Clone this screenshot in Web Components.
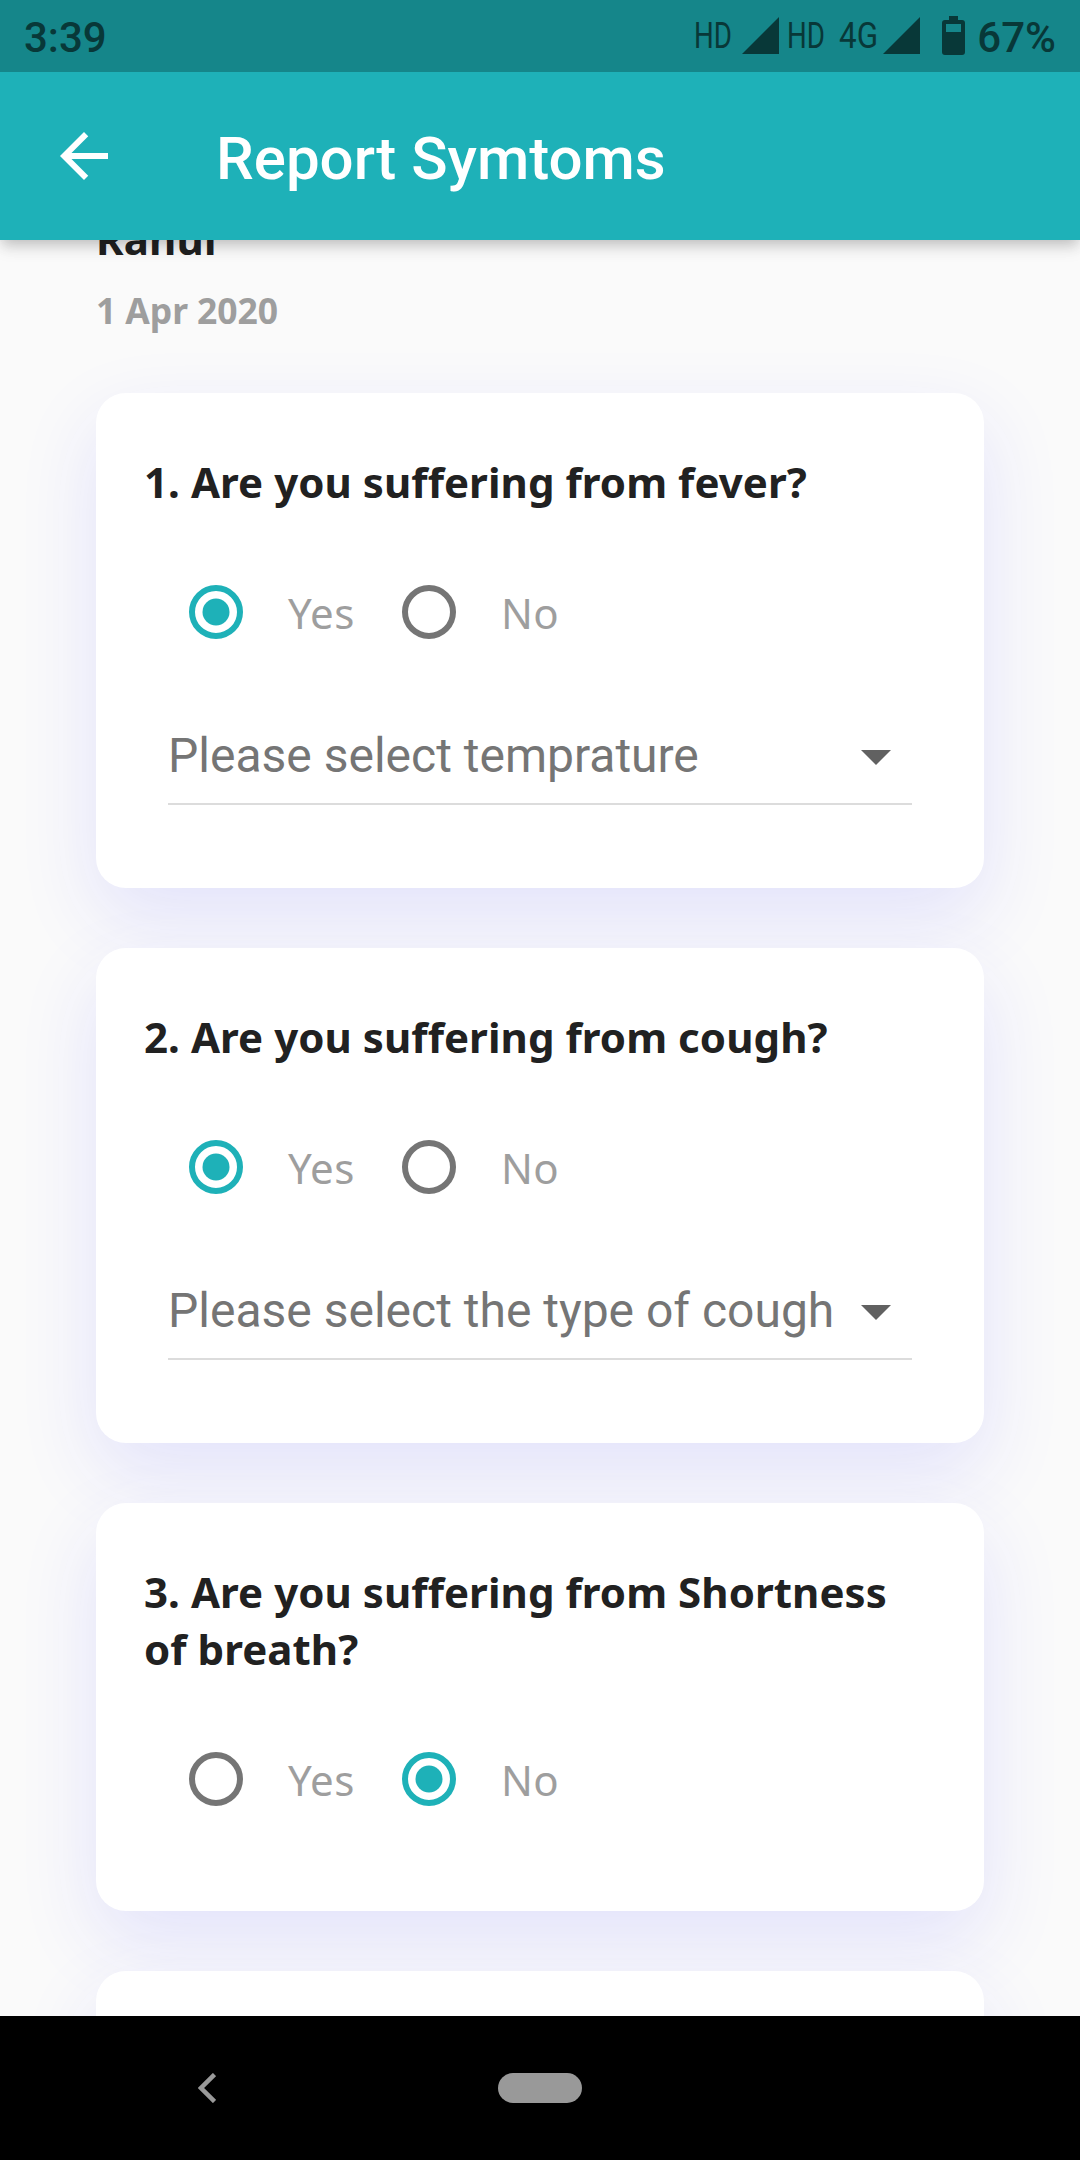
<!DOCTYPE html>
<html lang="en">
<head>
<meta charset="utf-8">
<title>Report Symtoms</title>
<style>
    html, body {
        margin: 0;
        padding: 0;
    }

    body {
        font-family: "Noto Sans", sans-serif;
        background: #fafafa;
    }
</style>
</head>
<body>
<app-screen>
    <status-bar slot="top" time="3:39" battery="67%"></status-bar>
    <app-bar slot="top">Report Symtoms</app-bar>

    <report-header name="Rahul">1 Apr 2020</report-header>
    <question-card>
        <span slot="question">1. Are you suffering from fever?</span>
        <radio-option checked>Yes</radio-option>
        <radio-option>No</radio-option>
        <select-field slot="detail">Please select temprature</select-field>
    </question-card>
    <question-card>
        <span slot="question">2. Are you suffering from cough?</span>
        <radio-option checked>Yes</radio-option>
        <radio-option>No</radio-option>
        <select-field slot="detail">Please select the type of cough</select-field>
    </question-card>
    <question-card>
        <span slot="question">3. Are you suffering from Shortness of breath?</span>
        <radio-option>Yes</radio-option>
        <radio-option checked>No</radio-option>
    </question-card>
    <question-card></question-card>

    <nav-bar slot="bottom"></nav-bar>
</app-screen>

<script>
class AppScreen extends HTMLElement {
    connectedCallback() {
        this.attachShadow({ mode: 'open' });
        this.shadowRoot.innerHTML = `
            <style>
                :host {
                    display: flex;
                    flex-direction: column;
                    width: 1080px;
                    height: 2160px;
                    overflow: hidden;
                    background: #fafafa;
                }

                header, footer {
                    position: relative;
                    z-index: 1;
                    flex: none;
                }

                main {
                    flex: 1;
                    min-height: 0;
                    overflow: hidden;
                }

                /* list is scrolled a little under the app bar */
                .list {
                    display: flex;
                    flex-direction: column;
                    gap: 60px;
                    margin-top: -30px;
                    padding: 0 96px;
                }
            </style>
            <header><slot name="top"></slot></header>
            <main><div class="list"><slot></slot></div></main>
            <footer><slot name="bottom"></slot></footer>
        `;
    }
}

class StatusBar extends HTMLElement {
    connectedCallback() {
        this.attachShadow({ mode: 'open' });
        this.shadowRoot.innerHTML = `
            <style>
                :host {
                    position: relative;
                    z-index: 1;
                    display: flex;
                    justify-content: space-between;
                    align-items: center;
                    box-sizing: border-box;
                    height: 72px;
                    padding: 4px 24px 0 24px;
                    background: #15868a;
                    color: #083838;
                    font: 500 42px/1 Roboto, sans-serif;
                }

                .tray {
                    display: flex;
                    align-items: center;
                }

                svg {
                    display: block;
                    fill: currentColor;
                    font: 400 36px Roboto, sans-serif;
                    margin-top: -4px;
                }

                .percent {
                    margin-left: 9px;
                }
            </style>
            <span>${this.getAttribute('time')}</span>
            <div class="tray">
                <svg width="276" height="72" viewBox="0 0 276 72">
                    <text x="2" y="48" textLength="38" lengthAdjust="spacingAndGlyphs">HD</text>
                    <path d="M50 54L87 17V54Z"/>
                    <text x="95" y="48" textLength="38" lengthAdjust="spacingAndGlyphs">HD</text>
                    <text x="147" y="48" textLength="39" lengthAdjust="spacingAndGlyphs">4G</text>
                    <path d="M191 54L228 17V54Z"/>
                    <path fill-rule="evenodd" d="M257 16h9v4h4q3 0 3 3v29q0 3-3 3h-17q-3 0-3-3V23q0-3 3-3h4zM254 24v8h15v-8z"/>
                </svg>
                <span class="percent">${this.getAttribute('battery')}</span>
            </div>
        `;
    }
}

class AppBar extends HTMLElement {
    connectedCallback() {
        this.attachShadow({ mode: 'open' });
        this.shadowRoot.innerHTML = `
            <style>
                :host {
                    display: flex;
                    align-items: center;
                    gap: 96px;
                    height: 168px;
                    padding-left: 48px;
                    background: #1eb1b8;
                    box-shadow: 0 6px 12px -3px rgba(0, 0, 0, 0.16),
                                0 10px 15px rgba(0, 0, 0, 0.07),
                                0 3px 20px rgba(0, 0, 0, 0.05);
                    color: #fff;
                }

                h1 {
                    margin: 6px 0 0;
                    font: 500 60px/70px Roboto, sans-serif;
                }
            </style>
            <svg width="72" height="72" viewBox="0 0 24 24" fill="currentColor">
                <path d="M20 11H7.83l5.59-5.59L12 4l-8 8 8 8 1.41-1.41L7.83 13H20v-2z"/>
            </svg>
            <h1><slot></slot></h1>
        `;
    }
}

class ReportHeader extends HTMLElement {
    connectedCallback() {
        this.attachShadow({ mode: 'open' });
        this.shadowRoot.innerHTML = `
            <style>
                :host {
                    display: flex;
                    flex-direction: column;
                    gap: 19px;
                    height: 123px;
                    font-weight: 700;
                }

                .name {
                    font-size: 42px;
                    line-height: 57px;
                    letter-spacing: 0.2px;
                    color: #212121;
                }

                .date {
                    font-size: 35.500px;
                    line-height: 49px;
                    letter-spacing: -0.1px;
                    color: #9e9e9e;
                }
            </style>
            <div class="name">${this.getAttribute('name')}</div>
            <div class="date"><slot></slot></div>
        `;
    }
}

class QuestionCard extends HTMLElement {
    connectedCallback() {
        this.attachShadow({ mode: 'open' });
        this.shadowRoot.innerHTML = `
            <style>
                :host {
                    display: block;
                    padding: 60px 48px;
                    border-radius: 30px;
                    background: #fff;
                    box-shadow: 0 30px 80px #e2e2fb;
                }

                .question {
                    min-height: 57px;
                    margin-bottom: 30px;
                    font-size: 42px;
                    font-weight: 700;
                    line-height: 57px;
                    letter-spacing: 0.06px;
                    color: #212121;
                }

                .options {
                    display: flex;
                    min-height: 144px;
                }
            </style>
            <div class="question"><slot name="question"></slot></div>
            <div class="options"><slot></slot></div>
            <slot name="detail"></slot>
        `;
    }
}

class RadioOption extends HTMLElement {
    connectedCallback() {
        this.attachShadow({ mode: 'open' });
        this.shadowRoot.innerHTML = `
            <style>
                :host {
                    display: flex;
                    align-items: center;
                    min-width: 213px;
                    font-size: 42px;
                    line-height: 57px;
                    letter-spacing: 0.4px;
                    color: #9e9e9e;
                }

                svg {
                    color: #757575;
                }

                circle {
                    fill: none;
                    stroke: currentColor;
                    stroke-width: 6;
                }

                .dot {
                    display: none;
                    fill: currentColor;
                    stroke: none;
                }

                :host([checked]) svg {
                    color: #1eb1b8;
                }

                :host([checked]) .dot {
                    display: block;
                }
            </style>
            <svg width="144" height="144" viewBox="0 0 144 144">
                <circle cx="72" cy="72" r="24"/>
                <circle class="dot" cx="72" cy="72" r="13.5"/>
            </svg>
            <slot></slot>
        `;
    }
}

class SelectField extends HTMLElement {
    connectedCallback() {
        this.attachShadow({ mode: 'open' });
        this.shadowRoot.innerHTML = `
            <style>
                :host {
                    display: flex;
                    align-items: center;
                    justify-content: space-between;
                    box-sizing: border-box;
                    height: 121px;
                    margin: 0 24px 23px;
                    padding-top: 24px;
                    border-bottom: 2px solid #dcdcdc;
                    font: 400 48px/56px Roboto, sans-serif;
                    color: #757575;
                    white-space: nowrap;
                }

                svg {
                    flex: none;
                    fill: #616161;
                }
            </style>
            <span><slot></slot></span>
            <svg width="72" height="72" viewBox="0 0 24 24"><path d="M7 10l5 5 5-5z"/></svg>
        `;
    }
}

class NavBar extends HTMLElement {
    connectedCallback() {
        this.attachShadow({ mode: 'open' });
        this.shadowRoot.innerHTML = `
            <style>
                :host {
                    display: grid;
                    grid-template-columns: 414px 252px 414px;
                    align-items: center;
                    justify-items: center;
                    height: 144px;
                    background: #000;
                }

                .home {
                    width: 84px;
                    height: 30px;
                    border-radius: 15px;
                    background: #999;
                }
            </style>
            <svg width="18" height="30" viewBox="0 0 18 30" fill="none" stroke="#999" stroke-width="4.5">
                <path d="M16.5 1.5L3 15l13.5 13.5"/>
            </svg>
            <div class="home"></div>
        `;
    }
}

customElements.define('app-screen', AppScreen);
customElements.define('status-bar', StatusBar);
customElements.define('app-bar', AppBar);
customElements.define('report-header', ReportHeader);
customElements.define('question-card', QuestionCard);
customElements.define('radio-option', RadioOption);
customElements.define('select-field', SelectField);
customElements.define('nav-bar', NavBar);
</script>
</body>
</html>
